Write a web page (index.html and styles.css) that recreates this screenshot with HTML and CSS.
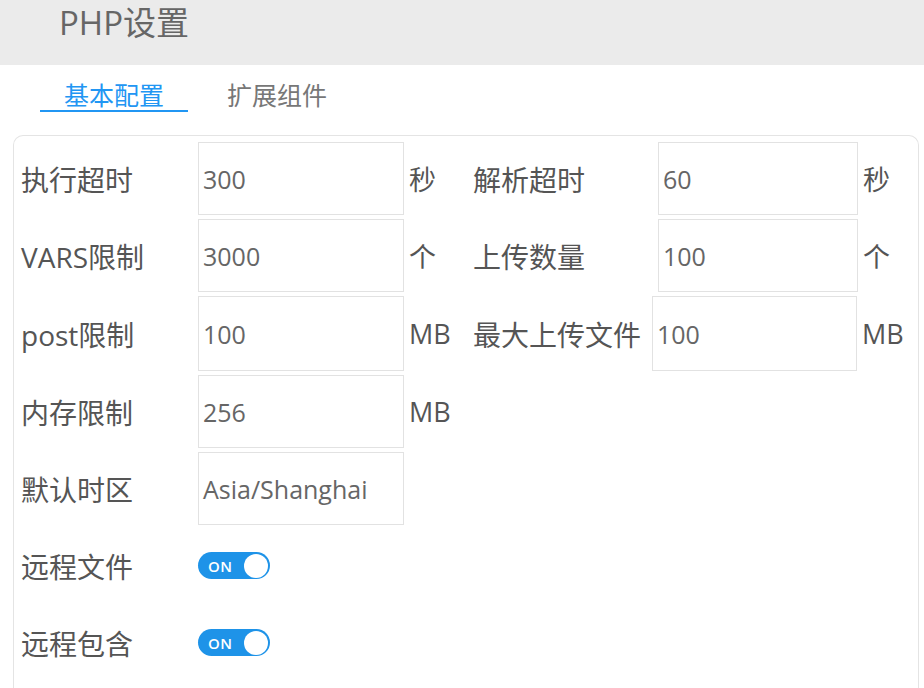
FILE: index.html
```html
<!DOCTYPE html>
<html lang="zh-CN">
<head>
<meta charset="utf-8">
<title>PHP设置</title>
<link rel="stylesheet" href="styles.css">
</head>
<body>
<div class="header"><span class="title">PHP设置</span></div>
<div class="tabs">
  <span class="tab active">基本配置</span>
  <span class="tab">扩展组件</span>
</div>
<div class="card">
  <div class="row">
    <div class="group left">
      <span class="label">执行超时</span>
      <span class="input">300</span>
      <span class="unit">秒</span>
    </div>
    <div class="group right">
      <span class="label rlabel">解析超时</span>
      <span class="input rinput">60</span>
      <span class="unit">秒</span>
    </div>
  </div>
  <div class="row">
    <div class="group left">
      <span class="label">VARS限制</span>
      <span class="input">3000</span>
      <span class="unit">个</span>
    </div>
    <div class="group right">
      <span class="label rlabel">上传数量</span>
      <span class="input rinput">100</span>
      <span class="unit">个</span>
    </div>
  </div>
  <div class="row tall">
    <div class="group left">
      <span class="label">post限制</span>
      <span class="input">100</span>
      <span class="unit">MB</span>
    </div>
    <div class="group right">
      <span class="label rlabel wide">最大上传文件</span>
      <span class="input rinput winput">100</span>
      <span class="unit">MB</span>
    </div>
  </div>
  <div class="row">
    <div class="group left">
      <span class="label">内存限制</span>
      <span class="input">256</span>
      <span class="unit">MB</span>
    </div>
  </div>
  <div class="row">
    <div class="group left">
      <span class="label">默认时区</span>
      <span class="input">Asia/Shanghai</span>
    </div>
  </div>
  <div class="row">
    <div class="group left">
      <span class="label">远程文件</span>
      <span class="switch"><span class="switch-text">ON</span><span class="knob"></span></span>
    </div>
  </div>
  <div class="row last">
    <div class="group left">
      <span class="label">远程包含</span>
      <span class="switch"><span class="switch-text">ON</span><span class="knob"></span></span>
    </div>
  </div>
</div>
</body>
</html>
```
FILE: styles.css
```css
* { box-sizing: border-box; }
html, body {
  margin: 0;
  padding: 0;
  background: #ffffff;
  overflow: hidden;
  height: 688px;
}
body {
  font-family: "Open Sans", "Noto Sans CJK SC", sans-serif;
  color: #555555;
}
.header {
  height: 65px;
  background: #ebebeb;
  padding-left: 59px;
}
.title {
  display: inline-block;
  font-size: 33px;
  line-height: 46px;
  color: #666666;
}
.tabs {
  display: flex;
  gap: 15px;
  padding-left: 40px;
  height: 70px;
  padding-top: 17px;
}
.tab {
  display: inline-block;
  font-size: 25px;
  line-height: 26px;
  height: 30px;
  padding: 0 24px;
  color: #777777;
}
.tab.active {
  color: #2196f3;
  border-bottom: 2px solid #2196f3;
}
.card {
  margin-left: 13px;
  width: 906px;
  height: 553px;
  border: 1px solid #e4e4e4;
  border-bottom: none;
  border-radius: 10px 10px 0 0;
  padding: 6px 0 0 7px;
}
.row {
  display: flex;
  height: 73px;
  margin-bottom: 4px;
}
.row.tall { height: 75px; }
.row.last { margin-bottom: 0; }
.group {
  display: flex;
  align-items: center;
  height: 100%;
}
.group.left { width: 452px; }
.label {
  font-size: 28px;
  width: 177px;
  color: #555555;
  white-space: nowrap;
}
.rlabel { width: 185px; }
.rlabel.wide { width: 179px; }
.input {
  display: flex;
  align-items: center;
  width: 206px;
  height: 100%;
  border: 1px solid #e2e2e2;
  padding-left: 4px;
  font-size: 25px;
  color: #666666;
}
.rinput { width: 200px; }
.rinput.winput { width: 205px; }
.unit {
  font-size: 27px;
  padding-left: 5px;
  color: #555555;
}
.switch {
  display: flex;
  align-items: center;
  justify-content: space-between;
  width: 72px;
  height: 27px;
  border-radius: 14px;
  background: #1e93e8;
  padding: 0 2px 0 10px;
}
.switch-text {
  font-size: 15px;
  font-weight: 600;
  color: #ffffff;
  letter-spacing: 0.5px;
}
.knob {
  width: 24px;
  height: 24px;
  border-radius: 50%;
  background: #ffffff;
}
```
